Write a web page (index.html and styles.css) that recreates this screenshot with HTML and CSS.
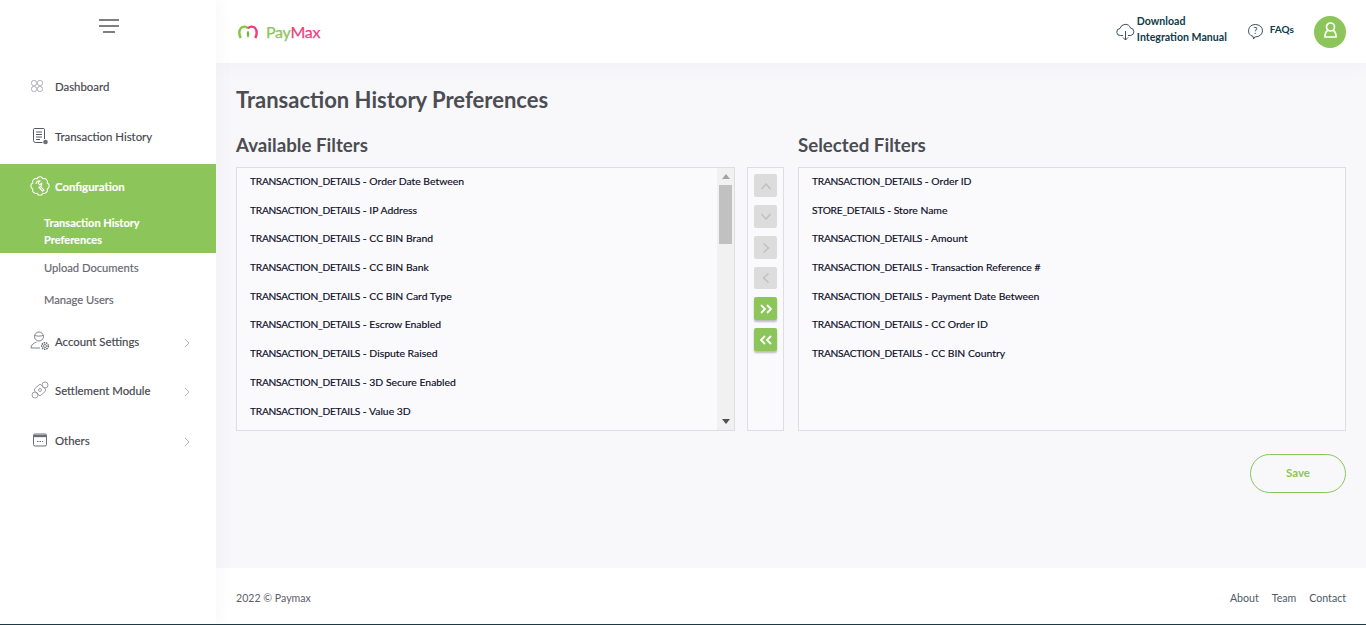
FILE: index.html
```html
<!DOCTYPE html>
<html lang="en">
<head>
<meta charset="utf-8">
<title>Transaction History Preferences</title>
<link rel="stylesheet" href="styles.css">
</head>
<body>
<div class="app">
  <aside class="sidebar">
    <div class="burger-row">
      <svg class="burger" width="20" height="14" viewBox="0 0 20 14"><path d="M0 1h20M0 7h20M4 13h12" stroke="#555" stroke-width="1.3" fill="none"/></svg>
    </div>
    <nav class="nav">
      <a class="nav-item item-dash">
        <svg class="ico" width="18" height="18" viewBox="0 0 18 18" fill="none" stroke="#9a9ca3" stroke-width=".8"><rect x=".5" y="3.500" width="5" height="5" rx="2"/><rect x="6.500" y="3.500" width="5" height="5" rx="2"/><rect x=".5" y="9.500" width="5" height="5" rx="2"/><rect x="6.500" y="9.500" width="5" height="5" rx="2"/></svg>
        <span>Dashboard</span>
      </a>
      <a class="nav-item item-hist">
        <svg class="ico" width="18" height="18" viewBox="0 0 18 18" fill="none" stroke="#555a63" stroke-width="1"><path d="M13.500 12V2.500a1 1 0 0 0-1-1h-9a1 1 0 0 0-1 1v11a2 2 0 0 0 2 2h7"/><path d="M5 5h6M5 7.500h6M5 10h6M5 12.500h4"/><circle cx="14.500" cy="15" r="2.300" fill="#6b6f78" stroke="none"/></svg>
        <span>Transaction History</span>
      </a>
      <div class="group-active">
        <a class="nav-item item-conf">
          <svg class="ico ico-lg" width="20" height="20" viewBox="0 0 18 18" fill="none" stroke="#fff" stroke-width=".95"><path d="M15.470 6.320A2.900 2.900 0 0 1 15.470 11.680A2.900 2.900 0 0 1 11.680 15.470A2.900 2.900 0 0 1 6.320 15.470A2.900 2.900 0 0 1 2.530 11.680A2.900 2.900 0 0 1 2.530 6.320A2.900 2.900 0 0 1 6.320 2.530A2.900 2.900 0 0 1 11.680 2.530A2.900 2.900 0 0 1 15.470 6.320Z"/><path d="M5.300 7.200a3 3 0 0 1 3.700-2.700L7.300 6.300 8.700 7.900l1.900-1.400a3 3 0 0 1-2.700 3.600l3.400 3.600 1.300-1.100-3.500-3.400"/></svg>
          <span>Configuration</span>
        </a>
        <a class="sub-item sub-active">Transaction History Preferences</a>
      </div>
      <a class="sub-item sub-upload">Upload Documents</a>
      <a class="sub-item sub-users">Manage Users</a>
      <a class="nav-item item-acct">
        <svg class="ico ico-lg" width="20" height="20" viewBox="0 0 20 20" fill="none" stroke="#63666e" stroke-width=".8"><circle cx="9" cy="5.500" r="4.500"/><path d="M4.700 4.500c2.500.8 6 .8 8.500 0M1 17c0-3.500 3-5 5.500-6M1 17h9"/><circle cx="15" cy="15" r="1.500"/><circle cx="15" cy="15" r="3.300" stroke-dasharray="1.500 .8" stroke-width="1.400"/></svg>
        <span>Account Settings</span>
        <svg class="chev" width="6" height="10" viewBox="0 0 6 10"><path d="M1 1l4 4-4 4" fill="none" stroke="#b5b6ba"/></svg>
      </a>
      <a class="nav-item item-settle">
        <svg class="ico" width="18" height="18" viewBox="0 0 18 18" fill="none" stroke="#85878e" stroke-width=".8"><rect x="4.500" y="4.500" width="9" height="9" rx="2" transform="rotate(45 9 9)"/><circle cx="4" cy="14" r="3"/><circle cx="14" cy="4" r="3"/><circle cx="9" cy="9" r="1.500"/></svg>
        <span>Settlement Module</span>
        <svg class="chev" width="6" height="10" viewBox="0 0 6 10"><path d="M1 1l4 4-4 4" fill="none" stroke="#b5b6ba"/></svg>
      </a>
      <a class="nav-item item-others">
        <svg class="ico" width="18" height="18" viewBox="0 0 18 18" fill="none" stroke="#6b6e76"><rect x="2.500" y="3" width="13" height="12" rx="1.500"/><path d="M2.500 5h13" stroke-width="2.400"/><path d="M6 10.500h6" stroke-dasharray="1.500 1"/></svg>
        <span>Others</span>
        <svg class="chev" width="6" height="10" viewBox="0 0 6 10"><path d="M1 1l4 4-4 4" fill="none" stroke="#b5b6ba"/></svg>
      </a>
    </nav>
  </aside>
  <div class="body">
    <header class="topbar">
      <div class="logo">
        <svg width="20" height="14" viewBox="0 0 20 14" fill="none"><path d="M2.800 13C.6 9.500 1 5 3 3c2-2 5-1.800 7 .3" stroke="#86c440" stroke-width="2.400"/><path d="M10 3.300c2-2.100 5-2.300 7-.3 2 2 2.400 6.500.2 10" stroke="#ee3f7a" stroke-width="2.400"/><path d="M10 5.500c1.700 1.800 1.700 5 0 7.500-1.700-2.500-1.700-5.700 0-7.500z" fill="#6fb544"/></svg>
        <span class="logo-text"><span class="pay">Pay</span><span class="max">Max</span></span>
      </div>
      <div class="top-actions">
        <a class="top-link download">
          <svg width="19" height="19" viewBox="0 0 19 19" fill="none" stroke="#24404c" stroke-width=".9"><path d="M7 13.500H4.500a3.500 3.500 0 0 1-.5-7A5.500 5.500 0 0 1 14.500 6a3.800 3.800 0 0 1 .3 7.500H12"/><path d="M9.500 9v9M7 15.500l2.500 2.500 2.500-2.500"/></svg>
          <span class="top-text">Download<br>Integration Manual</span>
        </a>
        <a class="top-link faq">
          <svg width="17" height="17" viewBox="0 0 17 17" fill="none" stroke="#24404c" stroke-width=".9"><path d="M8.500 1.500a7 6.200 0 0 1 0 12.400H7.800L6.500 16l-.4-2.500A7 6.200 0 0 1 8.500 1.500z"/><text x="8.500" y="11" font-size="8.500" text-anchor="middle" fill="#24404c" stroke="none" font-family="Lato, sans-serif">?</text></svg>
          <span class="top-text">FAQs</span>
        </a>
        <div class="avatar">
          <svg class="avatar-ico" width="13" height="16" viewBox="0 0 13 16" fill="none" stroke="#fff" stroke-width="1.700"><circle cx="6.500" cy="5" r="4"/><path d="M3.500 8.500C2 9.500 1 11.500 1 15h11c0-3.500-1-5.500-2.500-6.500"/></svg>
        </div>
      </div>
    </header>
    <main class="content">
      <h1 class="page-title">Transaction History Preferences</h1>
      <div class="picker">
        <section class="col-available">
          <h2 class="col-title">Available Filters</h2>
          <div class="list-wrap">
            <ul class="list">
              <li><span class="pre">TRANSACTION_DETAILS</span> - Order Date Between</li>
              <li><span class="pre">TRANSACTION_DETAILS</span> - IP Address</li>
              <li><span class="pre">TRANSACTION_DETAILS</span> - CC BIN Brand</li>
              <li><span class="pre">TRANSACTION_DETAILS</span> - CC BIN Bank</li>
              <li><span class="pre">TRANSACTION_DETAILS</span> - CC BIN Card Type</li>
              <li><span class="pre">TRANSACTION_DETAILS</span> - Escrow Enabled</li>
              <li><span class="pre">TRANSACTION_DETAILS</span> - Dispute Raised</li>
              <li><span class="pre">TRANSACTION_DETAILS</span> - 3D Secure Enabled</li>
              <li><span class="pre">TRANSACTION_DETAILS</span> - Value 3D</li>
            </ul>
            <div class="scrollbar">
              <span class="sb-btn"><svg width="8" height="5" viewBox="0 0 8 5"><path d="M0 5L4 0l4 5z" fill="#a3a3a3"/></svg></span>
              <span class="sb-thumb"></span>
              <span class="sb-btn sb-end"><svg width="8" height="5" viewBox="0 0 8 5"><path d="M0 0L4 5l4-5z" fill="#505050"/></svg></span>
            </div>
          </div>
        </section>
        <div class="controls">
          <button class="ctl"><svg width="12" height="8" viewBox="0 0 12 8"><path d="M1.500 7L6 2l4.500 5" fill="none" stroke="#bdbdbd" stroke-width="1.200"/></svg></button>
          <button class="ctl"><svg width="12" height="8" viewBox="0 0 12 8"><path d="M1.500 1L6 6l4.500-5" fill="none" stroke="#bdbdbd" stroke-width="1.200"/></svg></button>
          <button class="ctl"><svg width="8" height="12" viewBox="0 0 8 12"><path d="M1.500 1.500L6.500 6l-5 4.500" fill="none" stroke="#bdbdbd" stroke-width="1.200"/></svg></button>
          <button class="ctl ctl-short"><svg width="8" height="12" viewBox="0 0 8 12"><path d="M6.500 1.500L1.500 6l5 4.500" fill="none" stroke="#bdbdbd" stroke-width="1.200"/></svg></button>
          <button class="ctl ctl-on"><svg width="12" height="10" viewBox="0 0 12 10"><path d="M1 1l4 4-4 4M7 1l4 4-4 4" fill="none" stroke="#fff" stroke-width="1.800"/></svg></button>
          <button class="ctl ctl-on"><svg width="12" height="10" viewBox="0 0 12 10"><path d="M11 1L7 5l4 4M5 1L1 5l4 4" fill="none" stroke="#fff" stroke-width="1.800"/></svg></button>
        </div>
        <section class="col-selected">
          <h2 class="col-title">Selected Filters</h2>
          <ul class="list">
            <li><span class="pre">TRANSACTION_DETAILS</span> - Order ID</li>
            <li><span class="pre">STORE_DETAILS</span> - Store Name</li>
            <li><span class="pre">TRANSACTION_DETAILS</span> - Amount</li>
            <li><span class="pre">TRANSACTION_DETAILS</span> - Transaction Reference #</li>
            <li><span class="pre">TRANSACTION_DETAILS</span> - Payment Date Between</li>
            <li><span class="pre">TRANSACTION_DETAILS</span> - CC Order ID</li>
            <li><span class="pre">TRANSACTION_DETAILS</span> - CC BIN Country</li>
          </ul>
        </section>
      </div>
      <div class="actions"><button class="save">Save</button></div>
    </main>
    <footer class="footer">
      <span>2022 © Paymax</span>
      <div class="foot-links"><a>About</a><a>Team</a><a>Contact</a></div>
    </footer>
  </div>
</div>
</body>
</html>
```
FILE: styles.css
```css
* { box-sizing: border-box; }
html, body { margin: 0; padding: 0; height: 100%; overflow: hidden; }
body { font-family: "Lato", "Open Sans", sans-serif; background: #fff; color: #222; }
a { text-decoration: none; color: inherit; }
ul { list-style: none; margin: 0; padding: 0; }

.app { display: flex; height: 625px; border-bottom: 1px solid #1d3a44; }

.sidebar { width: 216px; flex: none; background: #fff; position: relative; z-index: 2; box-shadow: 4px 0 14px rgba(120,120,140,.05); }
.burger-row { height: 68px; display: flex; justify-content: center; padding: 19px 0 0 2px; }
.nav { display: flex; flex-direction: column; font-size: 11.400px; color: #44464d; -webkit-text-stroke: .15px; }
.nav-item { display: flex; align-items: center; padding-left: 31px; height: 36px; gap: 6px; position: relative; }
.ico { flex: none; }
.nav-item .ico-lg { margin-left: -1px; margin-right: -1px; }
.chev { position: absolute; left: 184px; top: 15px; }
.item-dash { margin-bottom: 14px; }
.item-hist { margin-bottom: 10px; }
.group-active { background: #8cc55a; color: #fff; height: 89px; }
.item-conf { height: 44px; font-weight: 700; }
.sub-item { display: block; padding-left: 44px; font-size: 11.200px; color: #65676f; line-height: 17px; }
.sub-active { color: #fff; padding-right: 40px; font-weight: 700; font-size: 11px; padding-top: 6px; }
.sub-upload { margin-top: 6px; }
.sub-users { margin-top: 15px; margin-bottom: 15px; }
.item-acct { margin-bottom: 13px; }
.item-settle { margin-bottom: 14px; }

.body { flex: 1; min-width: 0; display: flex; flex-direction: column; }
.topbar { height: 63px; flex: none; background: #fff; display: flex; align-items: center; justify-content: space-between; padding: 0 20px 0 22px; box-shadow: 0 4px 16px rgba(120,120,140,.05); position: relative; }
.logo { display: flex; align-items: center; gap: 8px; }
.logo-text { font-size: 16px; letter-spacing: -.25px; -webkit-text-stroke: .25px; }
.pay { color: #8cc55a; }
.max { color: #ec3f7f; }
.top-actions { display: flex; align-items: center; }
.top-link { display: flex; align-items: center; gap: 2px; }
.top-text { font-size: 10.600px; font-weight: 700; line-height: 16px; color: #0e3a4a; margin-bottom: 5px; }
.download { margin-right: 20px; }
.faq { margin-right: 20px; gap: 6px; }
.faq .top-text { font-size: 10px; }
.avatar { width: 32px; height: 32px; border-radius: 50%; background: #8cc55a; display: flex; align-items: center; justify-content: center; }
.avatar-ico { margin-bottom: 3px; }

.content { flex: 1; min-height: 0; background: #f8f8fb; padding: 24px 20px 0; }
.page-title { margin: 0; font-size: 22px; line-height: 26px; font-weight: 700; color: #4b4d52; }
.picker { display: flex; margin-top: 21px; }
.col-available { width: 499px; flex: none; }
.col-selected { flex: 1; min-width: 0; }
.col-title { margin: 0 0 11px; font-size: 18.700px; line-height: 22px; font-weight: 700; color: #4b4d52; }
.list-wrap { position: relative; }
.list { height: 264px; overflow: hidden; border: 1px solid #dedee2; background: #fafafd; font-size: 10.400px; color: #0a0a1e; padding: 0 13px; -webkit-text-stroke: .15px; }
.list li { height: 28.700px; line-height: 28.700px; white-space: nowrap; }
.list li:first-child { margin-top: -1px; }
.pre { font-size: 10.200px; letter-spacing: -.25px; }

.scrollbar { position: absolute; top: 1px; right: 1px; bottom: 1px; width: 17px; background: #f1f1f1; display: flex; flex-direction: column; }
.sb-btn { height: 17px; flex: none; display: flex; align-items: center; justify-content: center; }
.sb-end { margin-top: auto; }
.sb-thumb { display: block; height: 59px; margin: 0 2px; background: #c1c1c1; }

.controls { width: 37px; height: 264px; margin: 33px 14px 0 12px; flex: none; border: 1px solid #dedee2; background: #fafafd; display: flex; flex-direction: column; align-items: center; padding-top: 6px; gap: 8px; }
.ctl { width: 23px; height: 23px; flex: none; padding: 0; border: 0; border-radius: 2px; background: #dcdcdc; display: flex; align-items: center; justify-content: center; }
.ctl-short { height: 22px; }
.ctl-on { background: #8cc55a; box-shadow: 0 2px 2px rgba(0,0,0,.25); }

.actions { display: flex; justify-content: flex-end; margin-top: 23px; }
.save { width: 96px; height: 39px; padding: 0 0 2px; border-radius: 20px; border: 1px solid #8cc55a; background: transparent; color: #8cc55a; font: 700 11.500px "Lato", sans-serif; }

.footer { height: 56px; flex: none; background: #fff; display: flex; align-items: center; justify-content: space-between; padding: 4px 20px 0; font-size: 10.600px; color: #5d6068; }
.foot-links { display: flex; gap: 13px; color: #4d5a66; }
```
